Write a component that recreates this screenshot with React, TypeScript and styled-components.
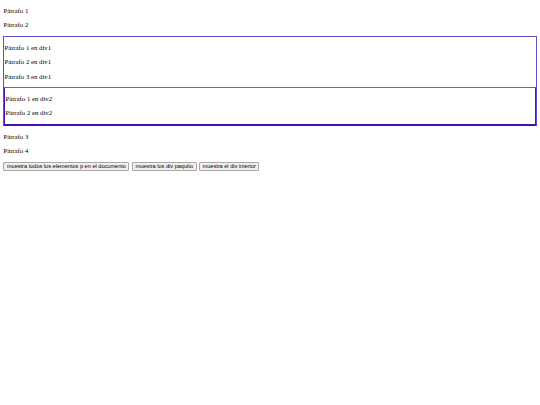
import React from "react";
import styled, { createGlobalStyle } from "styled-components";

const GlobalStyle = createGlobalStyle`
  html, body {
    background: #fff;
  }
  body {
    margin: 0 3.375px;
    font-family: "Liberation Serif", "Times New Roman", serif;
    font-size: 6.75px;
    color: #000;
  }
`;

function App() {
  return (
    <>
      <GlobalStyle />
      <Para>Párrafo 1</Para>
      <Para>Párrafo 2</Para>
      <OuterBox>
        <Para>Párrafo 1 en div1</Para>
        <Para>Párrafo 2 en div1</Para>
        <Para>Párrafo 3 en div1</Para>
        <InnerBox>
          <Para>Párrafo 1 en div2</Para>
          <Para>Párrafo 2 en div2</Para>
        </InnerBox>
      </OuterBox>
      <Para>Párrafo 3</Para>
      <Para>Párrafo 4</Para>
      <ButtonRow>
        <Button>muestra todos los elementos p en el documento</Button>
        <Button>muestra los div paquito</Button>
        <Button>muestra el div interior</Button>
      </ButtonRow>
    </>
  );
}

export default App;

const Para = styled.p`
  margin: 6.75px 0;
  line-height: 7.75px;
`;

const OuterBox = styled.div`
  border: 1px solid #5e52cc;
  border-bottom-color: #3c14a8;
`;

const InnerBox = styled.div`
  border: 1px solid #4a12b0;
  border-top-color: #a44ca6;
  border-bottom-color: #4a10b4;
`;

const ButtonRow = styled.div`
  display: flex;
  gap: 2.5px;
`;

const Button = styled.button`
  font-family: "Liberation Sans", Arial, sans-serif;
  font-size: 5.6px;
  line-height: normal;
  color: #000;
  background: #efefef;
  border: 1px solid #a8a8a8;
  border-radius: 1px;
  padding: 0.5px 2.5px;
  margin: 0;
`;
